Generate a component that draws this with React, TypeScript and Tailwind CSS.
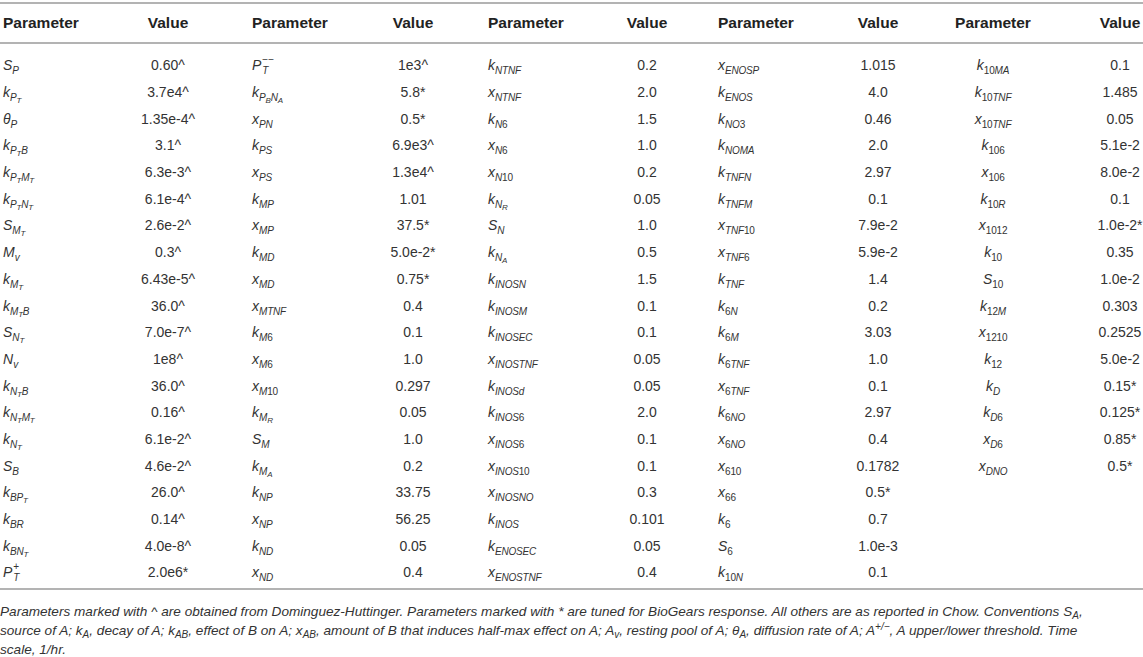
import type { ReactNode } from "react"

// label spec: "main|sub" where "_X" inside sub puts X one level lower
type Row = [string, string]

const cols: Row[][] = [
  [
    ["S|P", "0.60^"],
    ["k|P_T", "3.7e4^"],
    ["θ|P", "1.35e-4^"],
    ["k|P_TB", "3.1^"],
    ["k|P_TM_T", "6.3e-3^"],
    ["k|P_TN_T", "6.1e-4^"],
    ["S|M_T", "2.6e-2^"],
    ["M|v", "0.3^"],
    ["k|M_T", "6.43e-5^"],
    ["k|M_TB", "36.0^"],
    ["S|N_T", "7.0e-7^"],
    ["N|v", "1e8^"],
    ["k|N_TB", "36.0^"],
    ["k|N_TM_T", "0.16^"],
    ["k|N_T", "6.1e-2^"],
    ["S|B", "4.6e-2^"],
    ["k|BP_T", "26.0^"],
    ["k|BR", "0.14^"],
    ["k|BN_T", "4.0e-8^"],
    ["PPLUS", "2.0e6*"],
  ],
  [
    ["PMINUS", "1e3^"],
    ["k|P_BN_A", "5.8*"],
    ["x|PN", "0.5*"],
    ["k|PS", "6.9e3^"],
    ["x|PS", "1.3e4^"],
    ["k|MP", "1.01"],
    ["x|MP", "37.5*"],
    ["k|MD", "5.0e-2*"],
    ["x|MD", "0.75*"],
    ["x|MTNF", "0.4"],
    ["k|M6", "0.1"],
    ["x|M6", "1.0"],
    ["x|M10", "0.297"],
    ["k|M_R", "0.05"],
    ["S|M", "1.0"],
    ["k|M_A", "0.2"],
    ["k|NP", "33.75"],
    ["x|NP", "56.25"],
    ["k|ND", "0.05"],
    ["x|ND", "0.4"],
  ],
  [
    ["k|NTNF", "0.2"],
    ["x|NTNF", "2.0"],
    ["k|N6", "1.5"],
    ["x|N6", "1.0"],
    ["x|N10", "0.2"],
    ["k|N_R", "0.05"],
    ["S|N", "1.0"],
    ["k|N_A", "0.5"],
    ["k|INOSN", "1.5"],
    ["k|INOSM", "0.1"],
    ["k|INOSEC", "0.1"],
    ["x|INOSTNF", "0.05"],
    ["k|INOSd", "0.05"],
    ["k|INOS6", "2.0"],
    ["x|INOS6", "0.1"],
    ["x|INOS10", "0.1"],
    ["x|INOSNO", "0.3"],
    ["k|INOS", "0.101"],
    ["k|ENOSEC", "0.05"],
    ["x|ENOSTNF", "0.4"],
  ],
  [
    ["x|ENOSP", "1.015"],
    ["k|ENOS", "4.0"],
    ["k|NO3", "0.46"],
    ["k|NOMA", "2.0"],
    ["k|TNFN", "2.97"],
    ["k|TNFM", "0.1"],
    ["x|TNF10", "7.9e-2"],
    ["x|TNF6", "5.9e-2"],
    ["k|TNF", "1.4"],
    ["k|6N", "0.2"],
    ["k|6M", "3.03"],
    ["k|6TNF", "1.0"],
    ["x|6TNF", "0.1"],
    ["k|6NO", "2.97"],
    ["x|6NO", "0.4"],
    ["x|610", "0.1782"],
    ["x|66", "0.5*"],
    ["k|6", "0.7"],
    ["S|6", "1.0e-3"],
    ["k|10N", "0.1"],
  ],
  [
    ["k|10MA", "0.1"],
    ["k|10TNF", "1.485"],
    ["x|10TNF", "0.05"],
    ["k|106", "5.1e-2"],
    ["x|106", "8.0e-2"],
    ["k|10R", "0.1"],
    ["x|1012", "1.0e-2*"],
    ["k|10", "0.35"],
    ["S|10", "1.0e-2"],
    ["k|12M", "0.303"],
    ["x|1210", "0.2525"],
    ["k|12", "5.0e-2"],
    ["k|D", "0.15*"],
    ["k|D6", "0.125*"],
    ["x|D6", "0.85*"],
    ["x|DNO", "0.5*"],
  ],
]

const paramCls = [
  "pl-[3px] text-left",
  "pl-[44px] text-left",
  "pl-[35px] text-left",
  "pl-[31px] text-left",
  "pr-[29px] text-center",
]

function subText(sub: string) {
  const out: ReactNode[] = []
  for (let i = 0; i < sub.length; i++) {
    const c = sub[i]
    if (c === "_") {
      const n = sub[i + 1]
      out.push(
        <span key={i} className="align-[-2px] text-[8px] leading-[0] italic">
          {n}
        </span>,
      )
      i++
    } else if (/[0-9]/.test(c)) {
      out.push(
        <span key={i} className="not-italic">
          {c}
        </span>,
      )
    } else {
      out.push(
        <span key={i} className="italic">
          {c}
        </span>,
      )
    }
  }
  return out
}

function Label({ spec }: { spec: string }) {
  if (spec === "PPLUS" || spec === "PMINUS") {
    return (
      <span className="inline-flex items-center">
        <span className="italic">P</span>
        <span className="ml-[1px] inline-flex flex-col items-start gap-[1px] text-[10px] leading-[10px]">
          <span>{spec === "PPLUS" ? "+" : "−−"}</span>
          <span className="italic">T</span>
        </span>
      </span>
    )
  }
  const [main, sub] = spec.split("|")
  return (
    <span className="whitespace-nowrap">
      <span className="italic">{main}</span>
      <span className="align-[-4px] text-[10px] leading-[0] tracking-[-0.2px]">
        {subText(sub)}
      </span>
    </span>
  )
}

function Cap({ m, s }: { m: string; s: string }) {
  return (
    <>
      {m}
      <span className="align-[-3px] text-[10px] leading-[0]">{s}</span>
    </>
  )
}

export default function App() {
  const rows = Array.from({ length: 20 }, (_, i) => i)

  return (
    <div className="w-[1143px] bg-white font-['Liberation_Sans',Arial,sans-serif] text-[#333]">
      <div className="h-[2px]" />
      <div className="border-y-2 border-[#b3b3b3]">
        <div className="grid h-[38px] grid-cols-[128px_80px_165px_80px_154px_80px_151px_80px_179px_46px] items-center text-[15.5px] font-bold text-[#222]">
          {cols.map((_, c) => (
            <div key={c} className="contents">
              <div className={paramCls[c]}>Parameter</div>
              <div className="text-center">Value</div>
            </div>
          ))}
        </div>
      </div>

      <div className="border-b-2 border-[#b3b3b3] pt-[8px] pb-[2px]">
        {rows.map((r) => (
          <div
            key={r}
            className="grid h-[26.7px] grid-cols-[128px_80px_165px_80px_154px_80px_151px_80px_179px_46px] items-center text-[14px] leading-[20px]"
          >
            {cols.map((col, c) => {
              const row = col[r]
              return (
                <div key={c} className="contents">
                  <div className={paramCls[c]}>
                    {row ? <Label spec={row[0]} /> : null}
                  </div>
                  <div className="text-center whitespace-nowrap">
                    {row ? row[1] : ""}
                  </div>
                </div>
              )
            })}
          </div>
        ))}
      </div>

      <p className="pt-[12px] pr-[2px] text-[13.6px] leading-[19px] italic text-[#333]">
        Parameters marked with ^ are obtained from Dominguez-Huttinger.
        Parameters marked with * are tuned for BioGears response. All others
        are as reported in Chow. Conventions <Cap m="S" s="A" />,
        <br />
        source of A; <Cap m="k" s="A" />, decay of A; <Cap m="k" s="AB" />,
        effect of B on A; <Cap m="x" s="AB" />, amount of B that induces
        half-max effect on A; <Cap m="A" s="v" />, resting pool of A; θ
        <span className="align-[-3px] text-[10px] leading-[0]">A</span>,
        diffusion rate of A; A
        <span className="align-[5px] text-[10px] leading-[0]">+/−</span>, A
        upper/lower threshold. Time
        <br />
        scale, 1/hr.
      </p>
    </div>
  )
}
